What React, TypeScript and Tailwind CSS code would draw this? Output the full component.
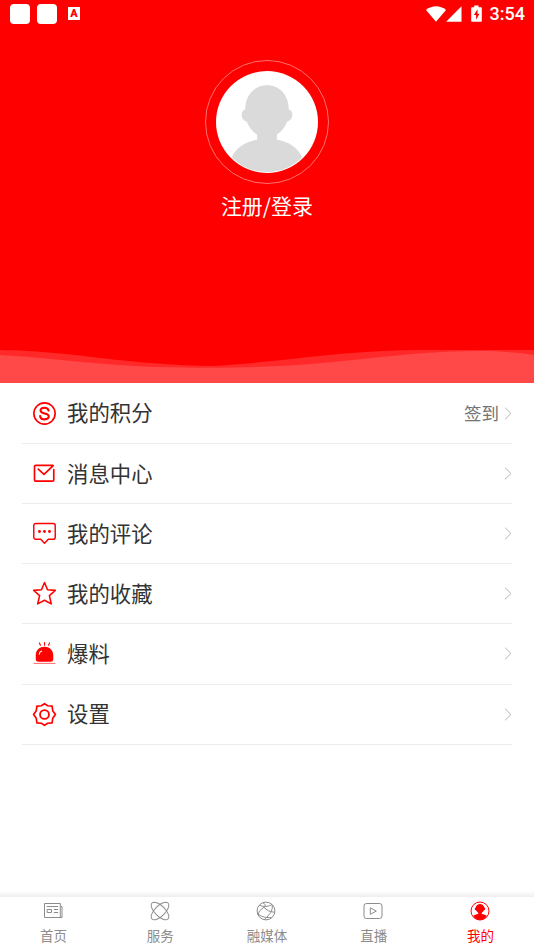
import type { ReactNode } from "react";

type MenuItem = {
  label: string;
  icon: ReactNode;
  extra?: string;
};

type Tab = {
  label: string;
  icon: ReactNode;
  active?: boolean;
};

const menuItems: MenuItem[] = [
  {
    label: "我的积分",
    extra: "签到",
    icon: (
      <>
        <circle cx="12" cy="12" r="10.2" strokeWidth="1.6" />
        <path d="M15.9 9.2C15.5 7.3 14 6.5 12 6.5c-2.3 0-3.8 1.1-3.8 2.7 0 3.9 7.9 1.6 7.9 5.5 0 1.8-1.7 2.9-4 2.9-2.4 0-4.1-1.1-4.3-3.1" strokeWidth="2" />
      </>
    ),
  },
  {
    label: "消息中心",
    icon: (
      <path d="M20 4.2H3.5a1.1 1.1 0 0 0-1.1 1.1v12.9a1.1 1.1 0 0 0 1.1 1.1h16.3a1.1 1.1 0 0 0 1.1-1.1V8.3M6 7.8l5.5 5.1 8.9-8.5" strokeWidth="1.6" />
    ),
  },
  {
    label: "我的评论",
    icon: (
      <>
        <path d="M3.7 2.3h16.6a2 2 0 0 1 2 2v11.3a2 2 0 0 1-2 2h-4.7L12 21.3l-3.600-3.700H3.700a2 2 0 0 1-2-2V4.300a2 2 0 0 1 2-2z" strokeWidth="1.4" />
        <g fill="currentColor" stroke="none">
          <circle cx="7.2" cy="10" r="1.4" />
          <circle cx="12" cy="10" r="1.4" />
          <circle cx="16.8" cy="10" r="1.4" />
        </g>
      </>
    ),
  },
  {
    label: "我的收藏",
    icon: (
      <path d="M12 1.5l2.9 6.9 7.5.6-5.7 5 1.8 8L12 18.5l-6.5 3.5 1.8-8-5.7-5 7.5-.6z" strokeWidth="1.5" />
    ),
  },
  {
    label: "爆料",
    icon: (
      <>
        <path d="M3.6 17.6v-3.8C3.6 8.8 7.4 5.6 12 5.6s8.4 3.2 8.4 8.2v3.8a2.2 2.2 0 0 1-2.2 2.2H5.800a2.200 2.200 0 0 1-2.200-2.200z" fill="currentColor" stroke="none" />
        <path d="M6.9 12.8c.2-1.6 1-2.6 2.4-3.1" stroke="white" strokeWidth="1" />
        <path d="M7.1 1.9l1 2.2M12 1.5v2.6M16.9 1.9l-1 2.2" strokeWidth="1.1" />
        <path d="M1.8 21.5h20.4" strokeWidth=".8" opacity=".7" />
      </>
    ),
  },
  {
    label: "设置",
    icon: (
      <>
        <path d="M12 1.5l3 2.1 4.3.4.6 4.4L22.5 12l-2.6 3.6-.6 4.4-4.3.4-3 2.1-3-2.1-4.3-.4-.6-4.4L1.5 12l2.6-3.6L4.7 4 9 3.6z" strokeWidth="1.6" />
        <circle cx="12" cy="12" r="4.3" strokeWidth="1.7" />
      </>
    ),
  },
];

const tabs: Tab[] = [
  {
    label: "首页",
    icon: (
      <>
        <path d="M1.5 2.5h15.8v14H1.5zM17.3 5.5H19v11h-2" />
        <path d="M3.7 5.5h11.5M10.8 8.5h4.4M10.8 11.5h4.4" />
        <path d="M4.2 8.5h4.3v3H4.2z" />
      </>
    ),
  },
  {
    label: "服务",
    icon: (
      <>
        <ellipse cx="10" cy="10" rx="11.3" ry="5.2" transform="rotate(45 10 10)" />
        <ellipse cx="10" cy="10" rx="11.3" ry="5.2" transform="rotate(-45 10 10)" />
      </>
    ),
  },
  {
    label: "融媒体",
    icon: (
      <>
        <circle cx="10" cy="10" r="8.9" />
        <path d="M6.8 1.9C9.4 3 10.2 4.7 8 6.3 5 8.3 2.3 10.5 2.2 14M8 6.3c2.4 2.8 6 4.7 10.4 4.9M3.7 4.3c3.4 1.7 8.6 1.6 12.5-.9M16.2 4c.7 5-1.8 8-4.4 11-.9 1.5-2 2.7-3.8 3.7M2 12.6c2.3 2.7 6.2 4.3 13.5 4" />
      </>
    ),
  },
  {
    label: "直播",
    icon: (
      <>
        <rect x="1" y="2.5" width="18" height="15" rx="2.4" />
        <path d="M7.3 6.8v6.500l6-3.200z" />
      </>
    ),
  },
  {
    label: "我的",
    active: true,
    icon: (
      <>
        <circle cx="10" cy="10" r="9" />
        <path d="M10 3c2.2 0 3.9 1.5 4.2 3.3 1.5.8 1.3 2.9-.4 3.2-.5 1-1.2 1.7-2 2.2v1.3c2 .3 4 1 5 2.1C15.2 17.7 12.8 19 10 19s-5.200-1.300-6.800-3.900c1-1.100 3-1.800 5-2.100v-1.300c-.8-.5-1.500-1.200-2-2.200-1.700-.3-1.900-2.400-.4-3.200C6.100 4.500 7.800 3 10 3z" fill="currentColor" stroke="none" />
      </>
    ),
  },
];

function StatusBar() {
  return (
    <div className="flex h-[27px] items-center pl-[10px] pr-[9px]">
      <div className="h-5 w-5 rounded-[4px] bg-white" />
      <div className="ml-[7px] h-5 w-5 rounded-[4px] bg-white" />
      <div className="ml-[11px] flex h-[13px] w-3 items-center justify-center bg-white font-['Roboto'] text-[11px] leading-none font-black text-[#ff0000]">
        A
      </div>
      <svg className="ml-auto h-4 w-5" viewBox="0 0 20 16" fill="white">
        <path d="M0 4C6-1 14-1 20 4L10 15.700z" />
      </svg>
      <svg className="h-4 w-4" viewBox="0 0 16 16" fill="white">
        <path d="M15.5 .3v15.400H.1z" />
      </svg>
      <svg className="ml-[9px] h-[18px] w-[11px]" viewBox="0 0 11 18" fill="white">
        <path d="M3.2 .5h4.400v1.700H10a.8.8 0 0 1 .8.800v13a.8.8 0 0 1-.8.800H1a.8.8 0 0 1-.8-.8V3a.8.8 0 0 1 .8-.8h2.200z" />
        <path d="M6.5 4.300L2.900 10h2.200v4.700l3.400-6H6.500z" fill="#ff0000" />
      </svg>
      <span className="ml-[8px] font-['Roboto'] text-[18px] font-medium text-white">3:54</span>
    </div>
  );
}

function Profile() {
  return (
    <div className="flex flex-col items-center pt-[33px]">
      <div className="flex h-[124px] w-[124px] items-center justify-center rounded-full border border-[#ff7070]">
        <svg className="h-[102px] w-[102px] rounded-full bg-white" viewBox="0 0 103 103">
          <path
            d="M51.5 14.500c-13 0-22 10-22 24.500-5 .5-5 11 1.500 12 2.500 6 6 10.500 10.500 13v5.500C29 71.500 20.500 77.500 16 87c8.500 9 21 15 35.500 15S78.500 96 87 87c-4.500-9.500-13-15.500-25.500-17.500V64C66 61.500 69.500 57 72 51c6.500-1 6.500-11.500 1.500-12 0-14.500-9-24.500-22-24.500z"
            fill="#dadada"
          />
        </svg>
      </div>
      <p className="mt-[6px] text-[21px] leading-[30px] text-white">注册/登录</p>
    </div>
  );
}

function Wave() {
  return (
    <svg className="mt-auto h-[35px] w-full" viewBox="0 0 534 35" preserveAspectRatio="none">
      <path d="M0 2C75 3 115 16 210 18C290 14 335 2 430 2H534V35H0z" fill="#ff2929" />
      <path d="M0 7C60 10 105 19 185 19.5C330 22 385 3 480 3C505 3 520 5 534 7V35H0z" fill="#ff4848" />
    </svg>
  );
}

function App() {
  return (
    <div className="flex h-[950px] w-[534px] flex-col overflow-hidden bg-white font-['Noto_Sans_CJK_SC',sans-serif]">
      <header className="flex h-[383px] shrink-0 flex-col bg-[#ff0000]">
        <StatusBar />
        <Profile />
        <Wave />
      </header>

      <main className="flex-1 px-[22px] pt-[0.6px]">
        {menuItems.map((item) => (
          <div
            key={item.label}
            className="flex h-[60.2px] items-center border-b border-[#ececec] pl-[10px]"
          >
            <svg
              className="h-[25px] w-[25px] text-[#ff0000]"
              viewBox="0 0 24 24"
              fill="none"
              stroke="currentColor"
              strokeLinecap="round"
              strokeLinejoin="round"
            >
              {item.icon}
            </svg>
            <span className="ml-[10px] pb-[1.4px] text-[21.4px] leading-[30px] text-[#333333]">{item.label}</span>
            <span className="ml-auto text-[17.5px] text-[#737373]">{item.extra}</span>
            <svg className="ml-[5px] h-[13px] w-2" viewBox="0 0 8 13" fill="none" stroke="#b5b5b5">
              <path d="M1 .7l6 5.800-6 5.800" />
            </svg>
          </div>
        ))}
      </main>

      <div className="h-[6px] bg-linear-to-b from-white to-[#eeeeee]" />
      <nav className="grid h-[53px] grid-cols-5">
        {tabs.map((tab) => (
          <div
            key={tab.label}
            className={`flex flex-col items-center pt-1 ${tab.active ? "text-[#ff0000]" : "text-[#8c8c8c]"}`}
          >
            <svg
              className="mr-px h-5 w-5"
              viewBox="0 0 20 20"
              fill="none"
              stroke="currentColor"
              strokeWidth="1"
              strokeLinejoin="round"
            >
              {tab.icon}
            </svg>
            <span className="mt-[4px] text-[13.5px] leading-5">{tab.label}</span>
          </div>
        ))}
      </nav>
    </div>
  );
}

export default App;
